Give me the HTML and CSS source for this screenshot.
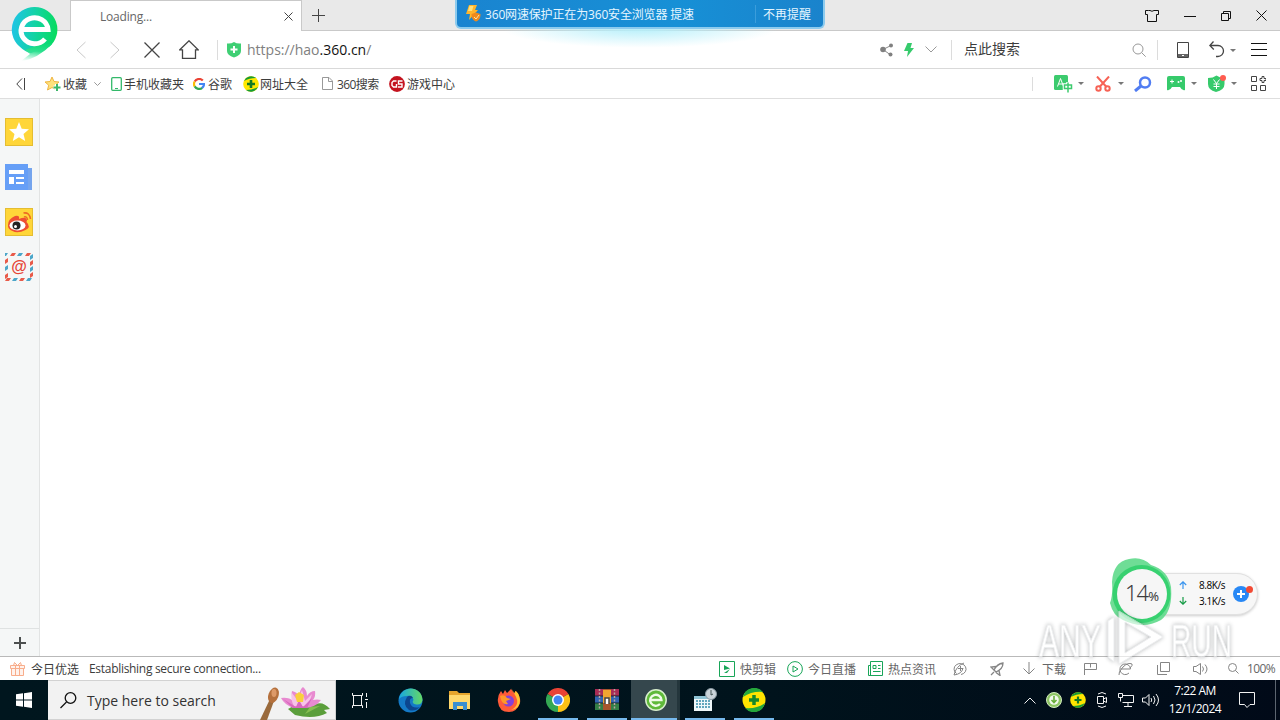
FILE: index.html
```html
<!DOCTYPE html>
<html lang="zh-CN">
<head>
  <meta charset="UTF-8">
  <meta name="viewport" content="width=device-width, initial-scale=1.0">
  <title>Loading...</title>
  <link rel="stylesheet" href="styles.css">
</head>
<body>
  <div class="browser">
    <header class="titlebar">
      <svg class="logo" width="48" height="58" viewBox="0 0 48 58">
        <defs>
          <linearGradient id="logoFill" x1="0" y1=".4" x2="1" y2=".5">
            <stop offset="0" stop-color="#1fc4e6"/><stop offset=".5" stop-color="#13d3a4"/><stop offset="1" stop-color="#06dc5c"/>
          </linearGradient>
          <linearGradient id="logoTail" x1=".6" y1="0" x2=".4" y2="1">
            <stop offset="0" stop-color="#0fdc78"/><stop offset=".4" stop-color="#2ce08f"/><stop offset="1" stop-color="#5fe8b0" stop-opacity="0"/>
          </linearGradient>
        </defs>
        <path d="M23.500 1A22.500 22.500 0 0 1 38 41Q30 43 20 47 14 46 8 40A22.500 22.500 0 0 1 23.500 1Z" fill="url(#logoFill)"/>
        <path d="M14 44 19 48 9 56Q28 52 41 38L30 38Z" fill="url(#logoTail)"/>
        <path d="M10 23.500H37A13.500 13 0 1 0 34 33" fill="none" stroke="#fff" stroke-width="5"/>
      </svg>
      <div class="tab">
        <span class="tab-title">Loading...</span>
        <svg width="9" height="9" viewBox="0 0 9 9"><path d="M.5.5l8 8M8.500.5l-8 8" class="dark"/></svg>
      </div>
      <svg class="new-tab" width="13" height="13" viewBox="0 0 13 13"><path d="M6.500 0v13M0 6.500h13" class="dark"/></svg>
      <div class="window-buttons">
        <svg width="14" height="12" viewBox="0 0 14 12"><path d="M3.500.5h1.500q2 1.500 4 0h4.500v4h-2v7h-9v-7h-2v-4Z" class="black"/></svg>
        <svg width="12" height="12" viewBox="0 0 12 12"><path d="M0 6.500h12" class="black"/></svg>
        <svg width="10" height="10" viewBox="0 0 10 10"><path d="M.5 2.500h7v7h-7zM2.500 2.500v-2h7v7h-2" class="black"/></svg>
        <svg width="11" height="11" viewBox="0 0 11 11"><path d="m.5.5 10 10m0-10-10 10" class="black"/></svg>
      </div>
    </header>

    <div class="toast">
      <svg width="15" height="17" viewBox="0 0 15 17">
        <path d="M3 0h8L9 5h3L3 15l1-6H0Z" fill="#ffb52b"/><path d="M3.500 1h4L6 6H2z" fill="#ffe07a"/>
        <path d="M10 7.500l4.500 1.500c0 4-1 6-4.500 7.500-3.500-1.500-4.500-3.500-4.500-7.500Z" fill="#f08a1c"/><path d="M8 12l2 2 3-4" stroke="#ffe4a0" fill="none"/>
      </svg>
      <span class="toast-text">360网速保护正在为360安全浏览器 提速</span>
      <span class="toast-dismiss">不再提醒</span>
    </div>
    <div class="toast-glow"></div>

    <div class="address-bar">
      <svg class="back" width="10" height="18" viewBox="0 0 10 18"><path d="M9.500 1 1 9l8.500 8" class="light"/></svg>
      <svg class="forward" width="10" height="18" viewBox="0 0 10 18"><path d="M.5 1 9 9 .5 17" class="light"/></svg>
      <svg class="stop" width="16" height="16" viewBox="0 0 16 16"><path d="m.5.5 15 15m0-15-15 15" class="dark thick"/></svg>
      <svg class="home" width="20" height="19" viewBox="0 0 20 19"><path d="M.8 9.800 10 .8l9.200 9H16.500v8.700h-13V9.800Z" class="dark thick"/></svg>
      <span class="divider"></span>
      <svg class="secure" width="14" height="16" viewBox="0 0 14 16"><path d="M0 1.500Q4 2 7 0q3 2 7 1.500V9q0 4-7 6.500Q0 13 0 9Z" fill="#3fcf74"/><path d="M7 4v7M3.500 7.500h7" stroke="#fff" stroke-width="2"/></svg>
      <span class="url">https://hao<b>.360.cn</b>/</span>
      <div class="address-tools">
        <svg width="14" height="14" viewBox="0 0 14 14"><path d="M11 2.500 3 6.500l7 5" stroke="#888" fill="none"/><circle cx="3" cy="6.500" r="2.800" fill="#808080"/><circle cx="11" cy="2.500" r="2" fill="#808080"/><circle cx="10.500" cy="11.500" r="2" fill="#808080"/></svg>
        <svg class="bolt" width="10" height="14" viewBox="0 0 10 14"><path d="M3.500 0H8L6.500 5H10L3 14l1-6H0Z" fill="#36cb6c"/></svg>
        <svg class="chevron" width="12" height="7" viewBox="0 0 12 7"><path d="m.5.5 5.500 5.500L11.500.5" class="gray"/></svg>
        <span class="divider"></span>
        <span class="search-hint">点此搜索</span>
        <svg width="14" height="14" viewBox="0 0 14 14"><circle cx="6" cy="6" r="5" class="gray"/><path d="m9.700 9.700 4 4" class="gray"/></svg>
        <span class="divider search-end"></span>
        <svg class="tablet" width="12" height="16" viewBox="0 0 12 16"><path d="M.5.5h11v15H.5z" class="dark"/><path d="M1 13.500h10" stroke="#666" stroke-width="3"/><path d="M5 13.500h2" stroke="#fff"/></svg>
        <svg class="undo" width="16" height="17" viewBox="0 0 16 17"><path d="M4.500.5.8 4.500l4 4M1 4.500h8a5.500 5.500 0 0 1 0 11H7" class="dark thick"/></svg>
        <i class="caret"></i>
        <svg class="menu" width="16" height="13" viewBox="0 0 16 13"><path d="M0 .5h16M0 6.500h16M0 12.500h16" class="black"/></svg>
      </div>
    </div>

    <div class="bookmarks">
      <svg class="collapse" width="9" height="12" viewBox="0 0 9 12"><path d="M6 .5.8 6 6 11.500M8.500 0v12" class="dark"/></svg>
      <svg class="fav" width="17" height="16" viewBox="0 0 17 16"><path d="m7 1 2 4.500 5 .5-3.800 3.400L11.500 14 7 11.500 2.500 14l1.200-4.800L0 6l5-.5Z" fill="#fde17d" stroke="#efb541"/><path d="M12 8v7M8.500 11.500h7" stroke="#fff" stroke-width="4"/><path d="M12 8v7M8.500 11.500h7" stroke="#3db66a" stroke-width="2"/></svg>
      <span class="label two">收藏</span>
      <svg class="fold" width="7" height="4" viewBox="0 0 7 4"><path d="m.3.3 3.200 3.200L6.700.3" class="gray"/></svg>
      <svg class="phone" width="11" height="14" viewBox="0 0 11 14"><rect x=".7" y=".7" width="9.600" height="12.600" rx="1" fill="#fff" stroke="#33b96a" stroke-width="1.300"/><path d="M4 11.500h3" stroke="#33b96a"/></svg>
      <span class="label five">手机收藏夹</span>
      <svg class="google" width="12" height="12" viewBox="0 0 12 12"><g fill="none" stroke-width="2.200"><path d="M9.800 2.600A5 5 0 0 0 1.700 3.600" stroke="#ea4335"/><path d="M1.700 3.500a5 5 0 0 0 0 5" stroke="#fbbc05"/><path d="M1.700 8.400a5 5 0 0 0 7.500 1.400" stroke="#34a853"/><path d="M9 10q2-1.500 2-4H6" stroke="#4285f4"/></g></svg>
      <span class="label two">谷歌</span>
      <svg class="hao" width="16" height="16" viewBox="0 0 16 16"><circle cx="8" cy="8" r="7.800" fill="#ffe800"/><path d="M1 5A7.800 7.800 0 0 1 13 2Q6 2 1 5M15 11A7.800 7.800 0 0 1 3 14q7 0 12-3" fill="#169b35"/><path d="M8 4v8M4 8h8" stroke="#147a24" stroke-width="2.600"/></svg>
      <span class="label four">网址大全</span>
      <svg class="doc" width="11" height="13" viewBox="0 0 11 13"><path d="M.5.5H7L10.500 4v8.500H.5ZM6.500.5V4.500h4" fill="#fff" stroke="#999"/></svg>
      <span class="label latin">360搜索</span>
      <svg class="game" width="16" height="16" viewBox="0 0 16 16"><circle cx="8" cy="8" r="7.900" fill="#c4131f"/><path d="M7.500 5H4.500L3 6.500v3L4.500 11h3V8M13.500 5h-4v3h3.500v3H9" fill="none" stroke="#fff" stroke-width="1.400"/></svg>
      <span class="label four">游戏中心</span>
      <div class="plugins">
        <span class="divider short"></span>
        <svg class="translate" width="19" height="18" viewBox="0 0 19 18"><rect width="14" height="15" rx="1.500" fill="#3ccb6e"/><path d="M3.500 11.500 6.500 3.500l3 8M4.800 9h3.600" stroke="#fff" fill="none"/><path d="M14 7v10.500M10.500 10h7v3.500h-7z" stroke="#fff" stroke-width="3.500" fill="none"/><path d="M14 7.500v10M10.500 10h7v3.500h-7z" stroke="#3ccb6e" stroke-width="1.500" fill="none"/></svg>
        <i class="caret"></i>
        <svg class="cut" width="16" height="16" viewBox="0 0 16 16"><g fill="none" stroke="#f76255" stroke-width="2"><path d="m2 .5 9.500 10.500M14 .5 4.500 11"/><circle cx="3.500" cy="12.500" r="2.200"/><circle cx="12.500" cy="12.500" r="2.200"/></g></svg>
        <i class="caret"></i>
        <svg class="finder" width="18" height="16" viewBox="0 0 18 16"><circle cx="11" cy="6.500" r="5" fill="#fff" stroke="#517df2" stroke-width="2.500"/><path d="m7 10-6 5" stroke="#517df2" stroke-width="3"/></svg>
        <svg class="pad" width="18" height="15" viewBox="0 0 18 15"><path d="M2 0h14q2 0 2 2v12q-3 1-5-3H5q-2 4-5 3V2Q0 0 2 0Z" fill="#36ca6b"/><path d="M3 5.500h4M5 3.500v4" stroke="#fff"/><circle cx="11.500" cy="6" r="1" fill="#fff"/><circle cx="14" cy="5" r="1" fill="#fff"/></svg>
        <i class="caret"></i>
        <svg class="yuan" width="18" height="18" viewBox="0 0 18 18"><path d="M0 3q5 0 8.500-2.500Q12 3 16.500 3v6q0 6-8.500 8Q0 15 0 9Z" fill="#36ca6b"/><path d="m5.500 4.500 3 4 3-4M5.500 9h6M5.500 11.500h6M8.500 8v6" stroke="#fff" fill="none"/><circle cx="15" cy="3" r="3" fill="#ff5c50"/></svg>
        <i class="caret"></i>
        <svg class="apps" width="15" height="15" viewBox="0 0 15 15"><path d="M.5.5h5v5h-5zM.5 9.500h5v5h-5zM9.500 9.500h5v5h-5zM11 .5h2v2h2v2h-2v2h-2v-2H9v-2h2z" class="dark"/></svg>
      </div>
    </div>

    <main class="workspace">
      <aside class="sidebar">
        <svg width="28" height="28" viewBox="0 0 28 28"><rect x=".5" y=".5" width="27" height="27" fill="#ffd639" stroke="#e4bd32"/><path d="m14 4 2.700 6.700 7.300.6-5.500 4.700 1.700 7L14 19.300 7.800 23l1.700-7L4 11.300l7.300-.6Z" fill="#fff"/></svg>
        <svg width="28" height="28" viewBox="0 0 28 28"><path d="M23 5h4v22h-4z" fill="#75a5ee"/><path d="M0 1h23v26H0z" fill="#669ff7"/><path d="M4 7h15v4H4zM4 14h5v7H4zM11 14h8v2h-8zM11 19h8v2h-8z" fill="#fff"/></svg>
        <svg width="28" height="28" viewBox="0 0 28 28"><rect x=".5" y=".5" width="27" height="27" fill="#ffd639" stroke="#e4bd32"/><path d="M3 17Q3 11 10 8q5-1 4 3 7-3 8 1l-.5 2q5 5-1 8-8 4-13 1-5-2-4.500-6" fill="#ed4f32"/><ellipse cx="12.500" cy="17.500" rx="8" ry="5" fill="#fff"/><circle cx="11.500" cy="17.500" r="4" fill="#222"/><circle cx="10.500" cy="18.500" r="1.500" fill="#fff"/><path d="M19 9q3-1 3.500 3M18.500 5q6-1 7 6" fill="none" stroke="#ed6b25" stroke-width="1.600"/></svg>
        <div class="mail">
          <svg width="28" height="28" viewBox="0 0 28 28">
            <g fill="#e85b4a"><path d="M7 0h4L9 3H5zM22 0h4l-2 3h-4zM2 25h4l-2 3H0zM16 25h4l-2 3h-4zM0 7l3-2v4l-3 2zM0 22l3-2v4l-3 2zM25 9l3-2v4l-3 2zM25 21l3-2v4l-3 2z"/></g>
            <g fill="#4ba6c9"><path d="M0 0h3L1 3H0zM14 0h4l-2 3h-4zM9 25h4l-2 3H7zM23 25h4l-2 3h-4zM0 14l3-2v4l-3 2zM25 3l3-2v4l-3 2zM25 15l3-2v4l-3 2z"/></g>
          </svg>
          <span>@</span>
        </div>
        <div class="add"><svg width="12" height="12" viewBox="0 0 12 12"><path d="M6 0v12M0 6h12" stroke="#4c4f4f" stroke-width="2"/></svg></div>
      </aside>
      <section class="page"></section>
    </main>

    <div class="statusbar">
      <svg class="gift" width="15" height="14" viewBox="0 0 15 14"><path d="M.5 3.500h14v3H.5zM1.500 6.500h12v7h-12zM5.500 3.500v10M9.500 3.500v10M7.500 3.500l-3-3-1 3M7.500 3.500l3-3 1 3" fill="#fff2ec" stroke="#f8ad8b"/></svg>
      <span class="label four today">今日优选</span>
      <span class="status-text">Establishing secure connection...</span>
      <div class="status-tools">
        <svg width="16" height="16" viewBox="0 0 16 16"><path d="M.5.5h15v15H.5z" class="green"/><path d="m5 4 6 3.500L5 9zM5 12l6-4-3 4z" fill="#18a558"/></svg>
        <span class="label three">快剪辑</span>
        <svg width="16" height="16" viewBox="0 0 16 16"><circle cx="8" cy="8" r="7.400" class="green"/><path d="m6 5 5 3-5 3z" class="green"/></svg>
        <span class="label four">今日直播</span>
        <svg width="15" height="15" viewBox="0 0 15 15"><path d="M2.500.5h12v14H.5v-10h2zM2.500 4v10M5 4.500h3v3H5zM10 4.500h2.500M10 7.500h2.500M5 10.500h7.500" class="green"/></svg>
        <span class="label four hot">热点资讯</span>
        <svg class="boost" width="14" height="14" viewBox="0 0 14 14"><path d="M3.500 11.500A6 5.500 0 1 1 8 12.500M1 13Q3 4 11 1M1 13q8-1 9-7M7.500 4v5M5 6.500h5" class="gray dense"/></svg>
        <svg class="rocket" width="14" height="14" viewBox="0 0 14 14"><path d="M4 8Q7 2 13 1q0 6-7 9zM6 4.500 1 5l3 3M9 8.500l1 5-4-3M4 10l-3 3" class="gray dense thick"/></svg>
        <svg class="down" width="12" height="13" viewBox="0 0 12 13"><path d="M6 0v12M.5 6.500 6 12l5.500-5.500" class="gray dense"/></svg>
        <span class="label two">下载</span>
        <svg class="flag" width="13" height="12" viewBox="0 0 13 12"><path d="M.5 12V.5h12v6H.5M6.500.5v4" class="gray dense"/></svg>
        <svg class="ie" width="15" height="14" viewBox="0 0 15 14"><path d="M3 7h9.500A5.300 5.300 0 1 0 11 11M1 13Q0 10 5 5t9-3q1 1-2 4" class="gray dense"/></svg>
        <svg class="windows" width="13" height="13" viewBox="0 0 13 13"><path d="M3.500.5h9v9h-9zM.5 3v9.500H10" class="gray dense"/></svg>
        <svg class="sound" width="15" height="12" viewBox="0 0 15 12"><path d="M.5 3.500H3L7.500.5v11L3 8.500H.5zM9.500 3.500q2 2.500 0 5M12 1.500q4 4.500 0 9" class="gray dense"/></svg>
        <svg class="zoom" width="11" height="11" viewBox="0 0 11 11"><circle cx="4.500" cy="4.500" r="4" class="gray dense"/><path d="m7.500 7.500 3 3" class="gray dense"/></svg>
        <span class="percent">100%</span>
      </div>
    </div>

    <div class="speed">
      <div class="rates">
        <span class="rate"><svg width="8" height="8" viewBox="0 0 8 8"><path d="M4 8V1M.8 4 4 .8 7.200 4" fill="none" stroke="#3994ee" stroke-width="1.200"/></svg>8.8K/s</span>
        <span class="rate"><svg width="8" height="8" viewBox="0 0 8 8"><path d="M4 0v7M.8 4 4 7.200 7.200 4" fill="none" stroke="#169b46" stroke-width="1.200"/></svg>3.1K/s</span>
      </div>
      <svg width="20" height="18" viewBox="0 0 20 18"><circle cx="8" cy="10" r="8" fill="#2888f5"/><path d="M8 6v8M4 10h8" stroke="#fff" stroke-width="2"/><circle cx="16.500" cy="5.500" r="3.500" fill="#f24a34"/></svg>
    </div>
    <div class="memory">
      <svg width="66" height="70" viewBox="0 0 66 70"><path d="M3 24Q4 4 20 1q13-3 22 6 17 5 20 22 2 24-10 33-18 10-38 0-10-4-13-17 3-8 2-21" fill="#5fd98b" opacity=".9"/><circle cx="32.500" cy="36" r="29" fill="#2ecf6a" opacity=".85"/><circle cx="33" cy="36" r="25" fill="#f6f6f6"/></svg>
      <span class="used">14<small>%</small></span>
    </div>
    <svg class="watermark" width="210" height="72" viewBox="0 0 210 72">
      <g fill="#fff" stroke="#e3e5e7" stroke-width="1">
        <text x="2" y="49" textLength="62" lengthAdjust="spacingAndGlyphs">ANY</text>
        <text x="134" y="49" textLength="61" lengthAdjust="spacingAndGlyphs">RUN</text>
        <path d="M71 13l6-4v45l-6-5zM82 3l44 26-44 27zM88 14v31l26-16z" fill-rule="evenodd"/>
      </g>
    </svg>
  </div>

  <footer class="taskbar">
    <div class="start"><svg width="16" height="16" viewBox="0 0 16 16"><path d="M0 2.300 7 1.300v6.200H0zM8 1.200 16 0v7.500H8zM0 8.500h7v6.200l-7-1zM8 8.500h8V16l-8-1.200z" fill="#fff"/></svg></div>
    <div class="search">
      <svg class="lens" width="17" height="17" viewBox="0 0 17 17"><circle cx="10.500" cy="6" r="5.300" class="black thick"/><path d="M6.500 10 .5 16" class="black thick"/></svg>
      <span>Type here to search</span>
      <svg class="lotus" width="74" height="34" viewBox="0 0 74 34">
        <path d="M1 34 11 13l4 2L8 34z" fill="#9a6a3c"/><ellipse cx="14.500" cy="9" rx="5" ry="8" fill="#b5713d" transform="rotate(20 14 9)"/><ellipse cx="15" cy="7" rx="2.500" ry="4" fill="#dd9a68"/>
        <path d="M29 23q12-8 28-5 7-3 14 5l-6 1 3 3q-13 7-32 2z" fill="#5b9e3b"/><path d="M46 28l15-8-10 1" fill="#86bd50"/>
        <path d="M34 22q-9-4-12-10 8-1 12 3-2-7-1-10 5 1 7 5 1-7 4-9 4 3 4 9 3-5 8-5 1 5-2 9 4-1 8 0-6 8-17 8z" fill="#e88ad0"/><path d="M35 20q-4-7-2-13l6 8 4-11 3 11 7-7q-2 8-7 12z" fill="#f7c3e8"/><path d="M24 13l13 8 3-7 4 7 9-9-5 10H34z" fill="#d767be"/><path d="m36 9 4-3 5 3-1 7h-6z" fill="#f9cf3c"/>
      </svg>
    </div>
    <div class="taskview"><svg width="17" height="17" viewBox="0 0 17 17"><path d="M.5 1v2.500h10V1M.5 16v-2.500h10V16M1.500 3.500h8v10h-8zM14.500 1v4M14.500 10v6M13 7.500h3" class="white"/></svg></div>
    <div class="apps-row">
      <div class="app"><svg width="25" height="25" viewBox="0 0 25 25"><defs><linearGradient id="edge"><stop stop-color="#18a8df"/><stop offset="1" stop-color="#65d865"/></linearGradient></defs><circle cx="12.500" cy="12.500" r="12" fill="#147ac7"/><path d="M1 11C4-4 24-2 24.500 12q-1 6-8 4-3-1-1-4-1-5-7-4-5 0-7.500 3" fill="url(#edge)"/><path d="M9 9q-5 8 2 13 6 2 11-3-8 2-10-4-1-5 3-5-2-4-6-1" fill="#0c468f"/></svg></div>
      <div class="app"><svg width="23" height="21" viewBox="0 0 23 21"><path d="M1 1h8l2 2h11v16H1z" fill="#e6a52c"/><path d="M1 5h21v14H1z" fill="#ffd86c"/><path d="M5 12h14v8h-4v-4H9v4H5z" fill="#398ed0"/></svg></div>
      <div class="app"><svg width="24" height="24" viewBox="0 0 24 24"><path d="M4 3l2 3 2-4 2 3 4-4 3 4 2-2q5 6 4 12-3 9-11 9Q2 24 1 14 0 8 4 3" fill="#ff5b38"/><path d="m14 0 4 7q6 10-4 15 9-1 9-10-1-8-5-9v3z" fill="#ffc533"/><circle cx="11.500" cy="13" r="5.500" fill="#8441d9"/><path d="M3 8q5-2 7 2l4 1-5 2 2 3q-6 2-8-8" fill="#ff9828"/></svg></div>
      <div class="app open"><svg width="24" height="24" viewBox="0 0 24 24"><path d="M12 12 1.600 6A12 12 0 0 1 22.400 6z" fill="#e94335"/><path d="M12 12 22.400 6A12 12 0 0 1 12 24z" fill="#fbc116"/><path d="M12 12v12A12 12 0 0 1 1.600 6z" fill="#34a853"/><circle cx="12" cy="12" r="6" fill="#fff"/><circle cx="12" cy="12" r="4.500" fill="#4285f4"/></svg></div>
      <div class="app open"><svg width="24" height="22" viewBox="0 0 24 22"><path d="M0 0h24v7H0z" fill="#a82c55"/><path d="M0 7h24v7H0z" fill="#3164b1"/><path d="M0 14h24v7H0z" fill="#347f47"/><path d="M0 7h24M0 14h24" stroke="#1b2430"/><path d="M4.500 0v21M19.500 0v21" stroke="#b9a5a0" stroke-width="1.500" stroke-dasharray="2 1.500"/><path d="M8 0h8v21H8z" fill="#a8562d"/><path d="M8 1h8v13H8z" fill="#f0a531"/><path d="M10 15V9h4v6" fill="#fff" stroke="#444" stroke-width="1.500"/></svg></div>
      <div class="app open active"><svg width="22" height="22" viewBox="0 0 22 22"><circle cx="11" cy="11" r="10.200" fill="#5fb93a" stroke="#d8efcd" stroke-width="1.500"/><path d="M5 11h11.500A5.700 5.500 0 1 0 15 15" fill="none" stroke="#f0fbe8" stroke-width="2.300"/></svg></div>
      <div class="app open"><svg width="24" height="24" viewBox="0 0 24 24"><path d="M1 8h18v15H1z" fill="#eff8fa"/><path d="M1 8h18v3H1z" fill="#8fc4d5"/><path d="M3 13h14M3 16h14M3 19h14" stroke="#62a6bd" stroke-width="2" stroke-dasharray="2 1"/><circle cx="18" cy="6" r="5.500" fill="#cbd4da" stroke="#8b9aa3"/><path d="M18 2v5l2-1" fill="none" stroke="#455"/></svg></div>
      <div class="app open"><svg width="24" height="24" viewBox="0 0 24 24"><circle cx="12" cy="12" r="11.500" fill="#ffe400"/><path d="M1 9A11.500 11.500 0 0 1 21 4Q10 3 1 9M23 15A11.500 11.500 0 0 1 3 20q12 1 20-5" fill="#24a83c"/><path d="M12 7v10M7 12h10" stroke="#16882b" stroke-width="3.500"/></svg></div>
    </div>
    <div class="tray">
      <svg width="12" height="7" viewBox="0 0 12 7"><path d="m.5 6.500 5.500-5.500 5.500 5.500" class="white"/></svg>
      <svg width="16" height="16" viewBox="0 0 16 16"><circle cx="8" cy="8" r="7.500" fill="#8dc563" stroke="#d2eabf"/><circle cx="8" cy="8" r="4.800" fill="#f2f8ed"/><path d="M8 4v6M5.500 8 8 10.500 10.500 8" fill="none" stroke="#68ad3b" stroke-width="1.600"/></svg>
      <svg width="16" height="16" viewBox="0 0 16 16"><circle cx="8" cy="8" r="7.800" fill="#ffe400"/><path d="M1 5A7.800 7.800 0 0 1 13 2Q6 2 1 5M15 11A7.800 7.800 0 0 1 3 14q7 0 12-3" fill="#169b35"/><path d="M8 4.500v7M4.500 8h7" stroke="#147a24" stroke-width="2.200"/></svg>
      <svg width="12" height="16" viewBox="0 0 12 16"><path d="M1.500 4.500h6v7h-6zM7.500 7l3-1.500v5L7.500 9M2 2q4-3 8 0M2 14q4 3 8 0" class="white"/></svg>
      <svg width="16" height="14" viewBox="0 0 16 14"><path d="M.5.5h4v4h-4zM2.500 4.500v4M5 2.500h10.500v7h-11M10 9.500v4M6 13.500h8" class="white"/></svg>
      <svg width="17" height="14" viewBox="0 0 17 14"><path d="M.5 5h3L7 1.500v11L3.500 9h-3zM9 5q1.500 2 0 4M11.500 3q3 4 0 8M14 1q5 6 0 12" class="white"/></svg>
      <div class="clock"><span>7:22 AM</span><span>12/1/2024</span></div>
      <svg width="16" height="16" viewBox="0 0 16 16"><path d="M.5.5h15v12H11L8 15.500 5.500 12.500h-5z" class="white"/></svg>
      <span class="peek"></span>
    </div>
  </footer>
</body>
</html>
```

FILE: styles.css
```css
* {
  box-sizing: border-box;
}
body {
  margin: 0;
  width: 1280px;
  height: 720px;
  overflow: hidden;
  font-family: "Open Sans", "Noto Sans CJK SC", sans-serif;
  font-size: 12px;
  color: #3c3c3c;
  background: #fff;
}
svg {
  display: block;
  flex-shrink: 0;
}
.dark, .black, .gray, .light, .white, .green {
  fill: none;
  stroke-width: 1;
}
.dark { stroke: #444; }
.black { stroke: #111; }
.gray { stroke: #999; }
.gray.dense { stroke: #858585; }
.light { stroke: #c8c8c8; }
.white { stroke: #f2f2f2; }
.green { stroke: #18a558; }
.thick { stroke-width: 1.3; }

.browser {
  position: relative;
  display: flex;
  flex-direction: column;
  height: 680px;
}

/* title bar */
.titlebar {
  display: flex;
  align-items: center;
  height: 31px;
  padding-left: 70px;
  background: #e9e9e9;
  border-bottom: 1px solid #c9c9c9;
}
.logo {
  position: absolute;
  left: 11px;
  top: 6px;
  z-index: 2;
}
.tab {
  display: flex;
  align-items: center;
  justify-content: space-between;
  width: 232px;
  height: 31px;
  margin-bottom: -1px;
  padding: 0 8px 0 29px;
  background: #fff;
  border: 1px solid #c9c9c9;
  border-bottom: none;
}
.tab-title {
  color: #666;
  letter-spacing: -0.2px;
}
.new-tab {
  margin-left: 10px;
}
.window-buttons {
  display: flex;
  align-items: center;
  gap: 25px;
  margin-left: auto;
  padding: 1px 13px 0 0;
}

/* notification */
.toast {
  position: absolute;
  left: 455px;
  top: 0;
  z-index: 3;
  display: flex;
  align-items: center;
  width: 370px;
  height: 29px;
  padding: 0 12px 0 9px;
  color: #e6f6ff;
  background: linear-gradient(90deg, #1a84d0, #1790d6 60%, #1a83cc);
  border: 2px solid #8ccbee;
  border-top: none;
  border-radius: 0 0 6px 6px;
}
.toast-text {
  width: 270px;
  margin-left: 4px;
  letter-spacing: -0.16px;
  white-space: nowrap;
}
.toast-dismiss {
  padding-left: 7px;
  border-left: 1px solid #3b9ddb;
  white-space: nowrap;
}
.toast-glow {
  position: absolute;
  left: 500px;
  top: 28px;
  z-index: 2;
  width: 280px;
  height: 20px;
  background: radial-gradient(ellipse at 50% 0, #b5effa, rgba(255, 255, 255, 0) 70%);
}

/* address bar */
.address-bar {
  display: flex;
  align-items: center;
  height: 38px;
  border-bottom: 1px solid #d9d9d9;
}
.back { margin-left: 76px; }
.forward { margin-left: 24px; }
.stop { margin-left: 24px; }
.home { margin-left: 19px; }
.divider {
  width: 1px;
  height: 20px;
  margin-left: 18px;
  background: #dcdcdc;
}
.secure { margin-left: 9px; }
.url {
  margin-left: 6px;
  font-size: 14px;
  color: #808080;
}
.url b {
  font-weight: normal;
  color: #111;
}
.address-tools {
  display: flex;
  align-items: center;
  margin-left: auto;
  padding-right: 13px;
}
.bolt { margin-left: 10px; }
.chevron { margin-left: 11px; }
.address-tools .divider { margin-left: 14px; }
.search-hint {
  width: 168px;
  margin: -4px 0 0 12px;
  font-size: 14px;
}
.address-tools .search-end { margin-left: 11px; }
.tablet { margin-left: 19px; }
.undo { margin-left: 20px; }
.caret {
  border: 3px solid transparent;
  border-top-color: #777;
  border-bottom: none;
}
.undo + .caret {
  margin-left: 5px;
  margin-top: 2px;
}
.menu { margin-left: 15px; }

/* bookmarks */
.bookmarks {
  display: flex;
  align-items: center;
  height: 30px;
  border-bottom: 1px solid #dedede;
}
.label {
  flex-shrink: 0;
  white-space: nowrap;
}
.two { width: 24px; }
.three { width: 36px; }
.four { width: 48px; }
.five { width: 60px; }
.latin {
  width: 42px;
  margin-left: 4px;
  letter-spacing: -0.6px;
}
.collapse { margin-left: 16px; }
.fav {
  margin-left: 20px;
  margin-right: 1px;
}
.fold { margin-left: 7px; }
.phone {
  margin-left: 10px;
  margin-right: 2px;
}
.google {
  margin-left: 9px;
  margin-right: 3px;
}
.hao {
  margin-left: 11px;
  margin-right: 1px;
}
.doc { margin-left: 14px; }
.game {
  margin-left: 10px;
  margin-right: 2px;
}
.plugins {
  display: flex;
  align-items: center;
  margin-left: auto;
  padding-right: 14px;
}
.plugins .short {
  height: 14px;
  margin-left: 0;
}
.translate { margin-left: 21px; }
.plugins .caret { margin-left: 9px; }
.translate + .caret { margin-left: 5px; }
.cut { margin-left: 11px; }
.plugins .cut + .caret { margin-left: 7px; }
.finder { margin-left: 10px; }
.pad { margin-left: 15px; }
.plugins .pad + .caret { margin-left: 6px; }
.yuan { margin-left: 11px; }
.plugins .yuan + .caret { margin-left: 5px; }
.apps { margin-left: 14px; }

/* page area */
.workspace {
  display: flex;
  flex: 1;
}
.sidebar {
  display: flex;
  flex-direction: column;
  gap: 17px;
  width: 40px;
  padding: 19px 0 0 5px;
  background: #f5f7f7;
  border-right: 1px solid #e2e4e4;
}
.mail {
  display: grid;
  width: 28px;
  height: 28px;
  place-items: center;
}
.mail svg, .mail span {
  grid-area: 1 / 1;
}
.mail span {
  color: #e54536;
  font-family: "Liberation Sans", sans-serif;
  font-size: 16px;
  font-weight: bold;
  line-height: 20px;
}
.add {
  display: flex;
  align-items: center;
  justify-content: center;
  height: 28px;
  margin: auto 0 0 -5px;
  padding-left: 1px;
  border-top: 1px solid #dfe2e2;
}
.page {
  flex: 1;
}

/* status bar */
.statusbar {
  display: flex;
  align-items: center;
  height: 24px;
  border-top: 1px solid #b9b9b9;
}
.gift {
  margin-left: 10px;
  margin-right: 6px;
}
.status-text {
  margin-left: 10px;
  letter-spacing: -0.3px;
}
.status-tools {
  display: flex;
  align-items: center;
  margin-left: auto;
  padding-right: 5px;
  color: #666;
}
.status-tools .label {
  margin-left: 5px;
  margin-right: 11px;
}
.status-tools .four { margin-right: 12px; }
.status-tools .hot { margin-right: 17px; }
.rocket { margin-left: 23px; }
.down { margin-left: 19px; }
.status-tools .two {
  margin-left: 7px;
  margin-right: 18px;
}
.ie { margin-left: 21px; }
.windows { margin-left: 24px; }
.sound { margin-left: 23px; }
.zoom { margin-left: 20px; }
.percent {
  width: 28px;
  margin-left: 8px;
  letter-spacing: -0.6px;
}

/* floating monitor */
.speed {
  position: absolute;
  left: 1144px;
  top: 573px;
  display: flex;
  align-items: center;
  width: 114px;
  height: 42px;
  padding: 0 0 3px 34px;
  background: #f7f7f7;
  border: 1px solid #e1e1e1;
  border-radius: 21px;
  box-shadow: 0 1px 3px rgba(0, 0, 0, 0.2);
}
.rates {
  width: 54px;
}
.rate {
  display: flex;
  align-items: center;
  gap: 12px;
  height: 16px;
  font-size: 10px;
  letter-spacing: -0.4px;
  color: #000;
}
.memory {
  position: absolute;
  left: 1109px;
  top: 558px;
}
.used {
  position: absolute;
  left: 16px;
  top: 17px;
  font-family: "Noto Sans", sans-serif;
  font-size: 22px;
  font-weight: 300;
  line-height: 34px;
  letter-spacing: -1px;
  white-space: nowrap;
}
.used small {
  font-size: 13px;
  font-weight: normal;
}
.watermark {
  position: absolute;
  left: 1037px;
  top: 608px;
  font-family: "Liberation Sans", sans-serif;
  font-size: 46px;
  opacity: 0.65;
  filter: drop-shadow(0 0 2px rgba(60, 65, 70, 0.55));
}

/* taskbar */
.taskbar {
  display: flex;
  height: 40px;
  color: #fff;
  background: linear-gradient(90deg, #00161e, #00131c 60%, #010a18);
}
.start {
  display: flex;
  align-items: center;
  justify-content: center;
  width: 48px;
}
.search {
  display: flex;
  align-items: center;
  width: 288px;
  padding-left: 12px;
  font-size: 14px;
  color: #333;
  background: #f2f2f2;
  border: 1px solid #d2d2d2;
  border-left: none;
}
.search span {
  width: 172px;
  margin-left: 10px;
  white-space: nowrap;
}
.lotus {
  margin-top: 5px;
}
.taskview {
  display: flex;
  align-items: center;
  width: 50px;
  padding-left: 16px;
}
.apps-row {
  display: flex;
}
.app {
  display: flex;
  align-items: center;
  justify-content: center;
  width: 49px;
}
.open {
  background: linear-gradient(#76b9ed, #76b9ed) center bottom / 40px 2px no-repeat;
}
.active {
  background: linear-gradient(#76b9ed, #76b9ed) center bottom / 49px 2px no-repeat, #35474d;
  border-right: 3px solid #24363c;
  padding-left: 3px;
}
.tray {
  display: flex;
  align-items: center;
  gap: 8px;
  margin-left: auto;
}
.tray svg:nth-child(1) { margin-right: 2px; }
.tray svg:nth-child(4) {
  margin-left: 2px;
  margin-right: 2px;
}
.clock {
  display: flex;
  flex-direction: column;
  align-items: center;
  width: 56px;
  margin-right: 8px;
  line-height: 18px;
  letter-spacing: -0.5px;
  white-space: nowrap;
}
.peek {
  width: 5px;
  height: 40px;
  margin-left: 12px;
  border-left: 1px solid #5c6570;
}
```
